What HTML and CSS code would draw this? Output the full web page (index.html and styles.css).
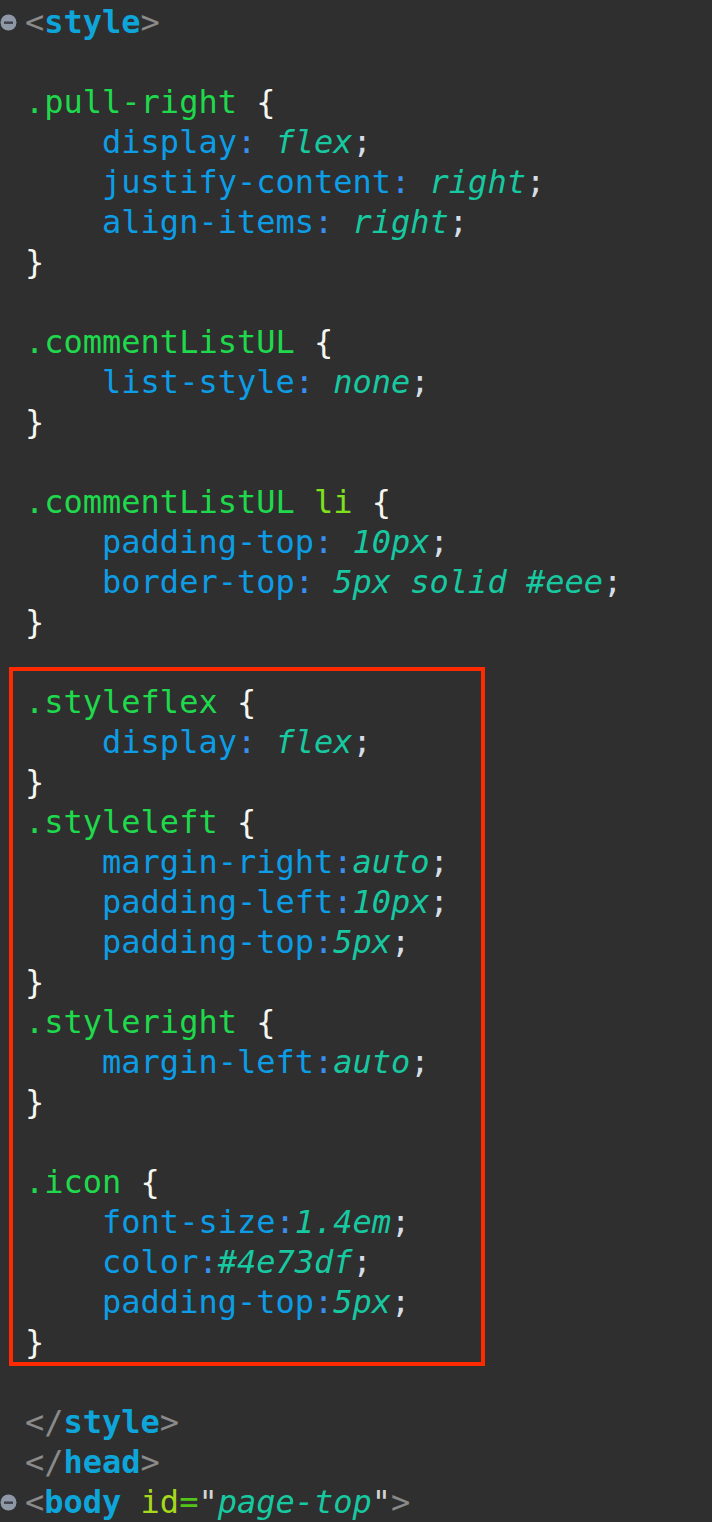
FILE: index.html
```html
<!DOCTYPE html>
<html lang="en">
<head>
    <meta charset="UTF-8">
    <meta name="viewport" content="width=device-width, initial-scale=1.0">
    <title>style block</title>
    <link rel="stylesheet" href="styles.css">
</head>
<body>
    <div class="editor">
        <div class="line"><span class="fold"><svg width="17" height="17" viewBox="0 0 17 17"><circle cx="8.5" cy="8.5" r="8" fill="#8f98a6"/><rect x="4" y="7.5" width="9" height="2.4" fill="#3c4048"/></svg></span><span class="br">&lt;</span><span class="tag">style</span><span class="br">&gt;</span></div>
        <div class="line"> </div>
        <div class="line"><span class="sel">.pull-right</span> <span class="brace">{</span></div>
        <div class="line">    <span class="prop">display</span><span class="col">:</span> <span class="val">flex</span><span class="semi">;</span></div>
        <div class="line">    <span class="prop">justify-content</span><span class="col">:</span> <span class="val">right</span><span class="semi">;</span></div>
        <div class="line">    <span class="prop">align-items</span><span class="col">:</span> <span class="val">right</span><span class="semi">;</span></div>
        <div class="line"><span class="brace">}</span></div>
        <div class="line"> </div>
        <div class="line"><span class="sel">.commentListUL</span> <span class="brace">{</span></div>
        <div class="line">    <span class="prop">list-style</span><span class="col">:</span> <span class="val">none</span><span class="semi">;</span></div>
        <div class="line"><span class="brace">}</span></div>
        <div class="line"> </div>
        <div class="line"><span class="sel">.commentListUL</span> <span class="elem">li</span> <span class="brace">{</span></div>
        <div class="line">    <span class="prop">padding-top</span><span class="col">:</span> <span class="val">10px</span><span class="semi">;</span></div>
        <div class="line">    <span class="prop">border-top</span><span class="col">:</span> <span class="val">5px solid #eee</span><span class="semi">;</span></div>
        <div class="line"><span class="brace">}</span></div>
        <div class="line"> </div>

        <div class="highlight">
            <div class="line"><span class="sel">.styleflex</span> <span class="brace">{</span></div>
            <div class="line">    <span class="prop">display</span><span class="col">:</span> <span class="val">flex</span><span class="semi">;</span></div>
            <div class="line"><span class="brace">}</span></div>
            <div class="line"><span class="sel">.styleleft</span> <span class="brace">{</span></div>
            <div class="line">    <span class="prop">margin-right</span><span class="col">:</span><span class="val">auto</span><span class="semi">;</span></div>
            <div class="line">    <span class="prop">padding-left</span><span class="col">:</span><span class="val">10px</span><span class="semi">;</span></div>
            <div class="line">    <span class="prop">padding-top</span><span class="col">:</span><span class="val">5px</span><span class="semi">;</span></div>
            <div class="line"><span class="brace">}</span></div>
            <div class="line"><span class="sel">.styleright</span> <span class="brace">{</span></div>
            <div class="line">    <span class="prop">margin-left</span><span class="col">:</span><span class="val">auto</span><span class="semi">;</span></div>
            <div class="line"><span class="brace">}</span></div>
            <div class="line"> </div>
            <div class="line"><span class="sel">.icon</span> <span class="brace">{</span></div>
            <div class="line">    <span class="prop">font-size</span><span class="col">:</span><span class="val">1.4em</span><span class="semi">;</span></div>
            <div class="line">    <span class="prop">color</span><span class="col">:</span><span class="val">#4e73df</span><span class="semi">;</span></div>
            <div class="line">    <span class="prop">padding-top</span><span class="col">:</span><span class="val">5px</span><span class="semi">;</span></div>
            <div class="line"><span class="brace">}</span></div>
        </div>

        <div class="line"> </div>
        <div class="line"><span class="br">&lt;/</span><span class="tag">style</span><span class="br">&gt;</span></div>
        <div class="line"><span class="br">&lt;/</span><span class="tag">head</span><span class="br">&gt;</span></div>
        <div class="line"><span class="fold"><svg width="17" height="17" viewBox="0 0 17 17"><circle cx="8.5" cy="8.5" r="8" fill="#8f98a6"/><rect x="4" y="7.5" width="9" height="2.4" fill="#3c4048"/></svg></span><span class="br">&lt;</span><span class="tag">body</span> <span class="attr">id</span><span class="eq">=</span><span class="quote">"</span><span class="str">page-top</span><span class="quote">"</span><span class="br">&gt;</span></div>
    </div>
</body>
</html>
```

FILE: styles.css
```css
:root {
    --bg: #2f2f2f;
    --selector: #1fd94c;
    --property: #0c9de6;
    --colon: #3a8ef0;
    --value: #17c9a1;
    --tag: #0ea6da;
    --bracket: #8a8a8a;
}
* {
    margin: 0;
    padding: 0;
    box-sizing: border-box;
}
html, body {
    background-color: var(--bg);
}
body {
    font-family: 'DejaVu Sans Mono', 'Liberation Mono', monospace;
    font-size: 32px;
    color: #f4f4f0;
    overflow: hidden;
}
.editor {
    padding-top: 2px;
}
.line {
    height: 40px;
    line-height: 40px;
    white-space: pre;
    padding-left: 25px;
}
.fold {
    display: inline-block;
    width: 25px;
    margin-left: -25px;
    vertical-align: top;
    padding-top: 12px;
    line-height: 0;
}
.highlight {
    width: 476px;
    margin: -15px 0 -4px 9px;
    padding: 11px 0 0 12px;
    border: 4px solid #ff2a00;
}
.highlight .line {
    padding-left: 0;
}
.sel { color: var(--selector); }
.elem { color: #7fe01e; }
.brace { color: #f6f6f0; }
.prop { color: var(--property); }
.col { color: var(--colon); }
.val {
    color: var(--value);
    font-style: italic;
}
.semi { color: #d6dde6; }
.tag {
    color: var(--tag);
    font-weight: bold;
}
.br { color: var(--bracket); }
.attr { color: #a6d81c; }
.eq { color: #52c41a; }
.quote { color: #d4d4d4; }
.str {
    color: var(--value);
    font-style: italic;
}
```
